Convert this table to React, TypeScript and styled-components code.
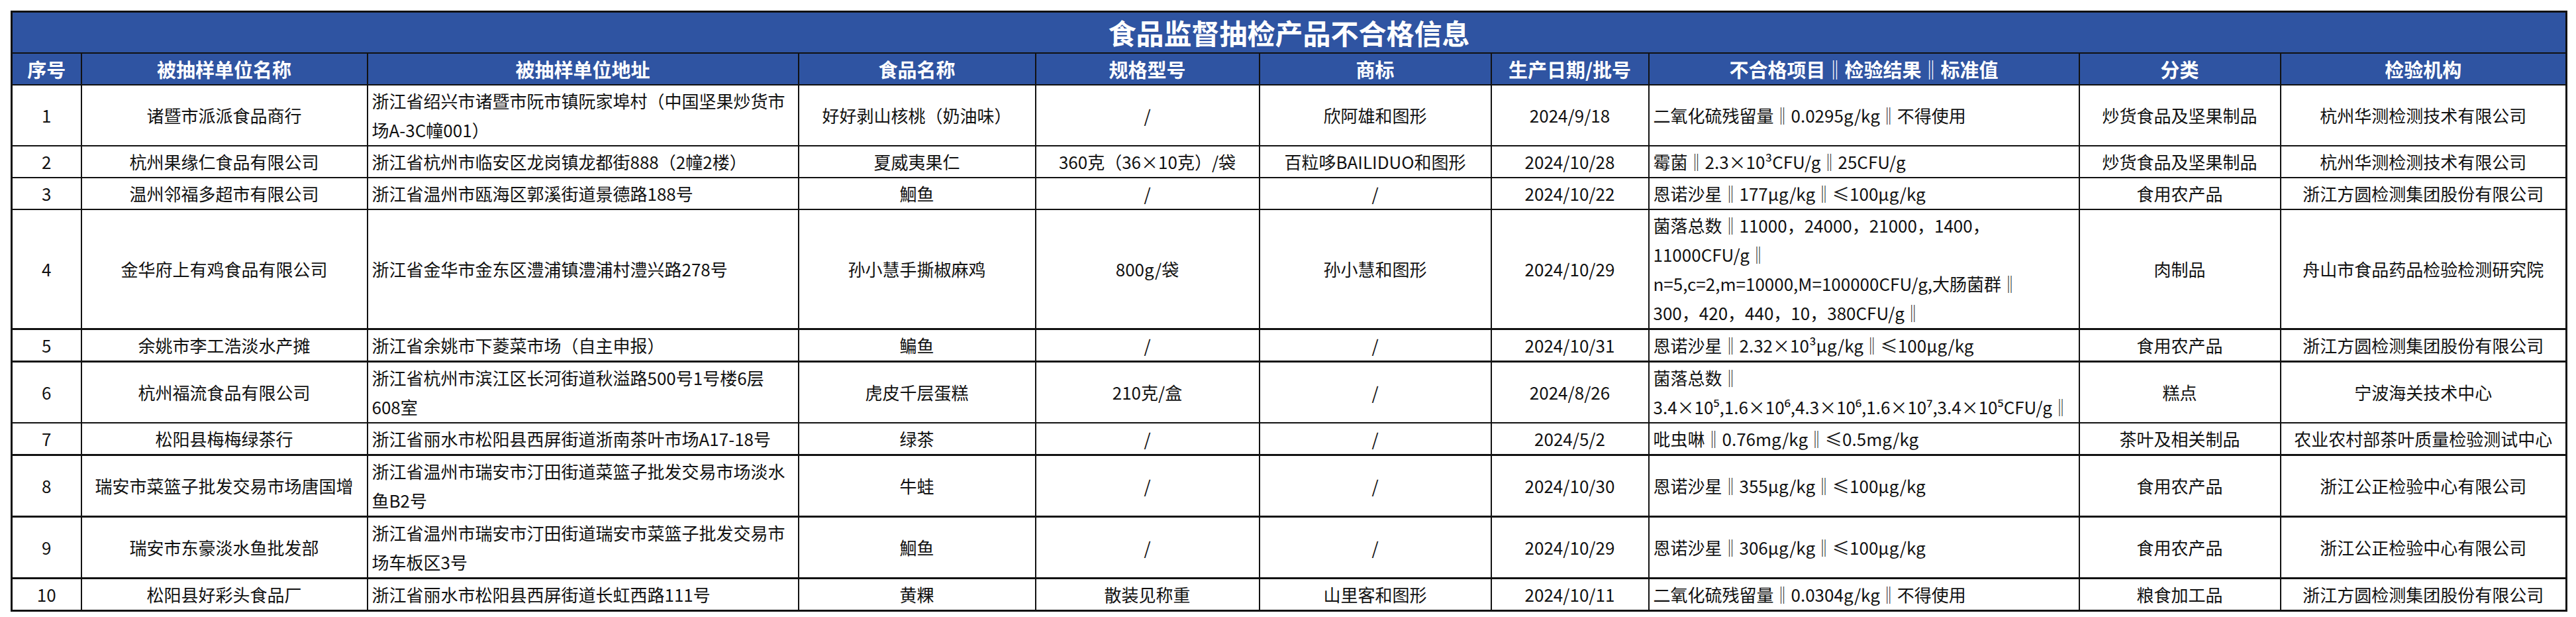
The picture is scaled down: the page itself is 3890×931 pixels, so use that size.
import React from 'react';
import styled, { createGlobalStyle } from 'styled-components';

const GlobalStyle = createGlobalStyle`
  html, body {
    margin: 0;
    padding: 0;
    background: #ffffff;
  }
  body {
    font-family: "Noto Sans CJK SC", "Noto Sans", sans-serif;
  }
`;

const Page = styled.div`
  box-sizing: border-box;
  width: 3890px;
  padding: 16px;
`;

const Table = styled.table`
  width: 3858px;
  table-layout: fixed;
  border-collapse: collapse;
  border: 3px solid #111;
  font-family: "Noto Sans CJK SC", "Noto Sans", sans-serif;
  color: #111;
`;

const TitleCell = styled.th`
  height: 60px;
  padding: 0;
  background: #2f54a2;
  color: #ffffff;
  font-size: 42px;
  font-weight: 700;
  line-height: 60px;
  text-align: center;
  border: 2px solid #111;
`;

const HeadCell = styled.th`
  padding: 1px 4px;
  background: #2f54a2;
  color: #ffffff;
  font-size: 29px;
  font-weight: 700;
  line-height: 44px;
  text-align: center;
  white-space: nowrap;
  border: 2px solid #111;
`;

const Row = styled.tr<{ $thick?: boolean }>`
  & > td {
    border-top-width: ${(p) => (p.$thick ? '3px' : '2px')};
  }
`;

const Cell = styled.td<{ $align?: 'left' | 'center' }>`
  padding: 1px 6px;
  font-size: 26px;
  font-weight: 400;
  line-height: 44px;
  text-align: ${(p) => p.$align ?? 'center'};
  vertical-align: middle;
  white-space: pre-line;
  word-break: normal;
  border: 2px solid #111;
`;

const widths = [105, 432, 651, 358, 338, 350, 238, 650, 304, 432];

const headers = [
  '序号',
  '被抽样单位名称',
  '被抽样单位地址',
  '食品名称',
  '规格型号',
  '商标',
  '生产日期/批号',
  '不合格项目‖检验结果‖标准值',
  '分类',
  '检验机构',
];

type Item = {
  no: string;
  unit: string;
  addr: string;
  food: string;
  spec: string;
  brand: string;
  date: string;
  fail: string;
  kind: string;
  lab: string;
  thick?: boolean;
};

const rows: Item[] = [
  {
    no: '1',
    unit: '诸暨市派派食品商行',
    addr: '浙江省绍兴市诸暨市阮市镇阮家埠村（中国坚果炒货市场A-3C幢001）',
    food: '好好剥山核桃（奶油味）',
    spec: '/',
    brand: '欣阿雄和图形',
    date: '2024/9/18',
    fail: '二氧化硫残留量‖0.0295g/kg‖不得使用',
    kind: '炒货食品及坚果制品',
    lab: '杭州华测检测技术有限公司',
  },
  {
    no: '2',
    unit: '杭州果缘仁食品有限公司',
    addr: '浙江省杭州市临安区龙岗镇龙都街888（2幢2楼）',
    food: '夏威夷果仁',
    spec: '360克（36×10克）/袋',
    brand: '百粒哆BAILIDUO和图形',
    date: '2024/10/28',
    fail: '霉菌‖2.3×10³CFU/g‖25CFU/g',
    kind: '炒货食品及坚果制品',
    lab: '杭州华测检测技术有限公司',
  },
  {
    no: '3',
    unit: '温州邻福多超市有限公司',
    addr: '浙江省温州市瓯海区郭溪街道景德路188号',
    food: '鮰鱼',
    spec: '/',
    brand: '/',
    date: '2024/10/22',
    fail: '恩诺沙星‖177μg/kg‖≤100μg/kg',
    kind: '食用农产品',
    lab: '浙江方圆检测集团股份有限公司',
  },
  {
    no: '4',
    unit: '金华府上有鸡食品有限公司',
    addr: '浙江省金华市金东区澧浦镇澧浦村澧兴路278号',
    food: '孙小慧手撕椒麻鸡',
    spec: '800g/袋',
    brand: '孙小慧和图形',
    date: '2024/10/29',
    fail:
      '菌落总数‖11000，24000，21000，1400，\n11000CFU/g‖\nn=5,c=2,m=10000,M=100000CFU/g,大肠菌群‖\n300，420，440，10，380CFU/g‖',
    kind: '肉制品',
    lab: '舟山市食品药品检验检测研究院',
  },
  {
    no: '5',
    unit: '余姚市李工浩淡水产摊',
    addr: '浙江省余姚市下菱菜市场（自主申报）',
    food: '鳊鱼',
    spec: '/',
    brand: '/',
    date: '2024/10/31',
    fail: '恩诺沙星‖2.32×10³μg/kg‖≤100μg/kg',
    kind: '食用农产品',
    lab: '浙江方圆检测集团股份有限公司',
    thick: true,
  },
  {
    no: '6',
    unit: '杭州福流食品有限公司',
    addr: '浙江省杭州市滨江区长河街道秋溢路500号1号楼6层\n608室',
    food: '虎皮千层蛋糕',
    spec: '210克/盒',
    brand: '/',
    date: '2024/8/26',
    fail: '菌落总数‖\n3.4×10⁵,1.6×10⁶,4.3×10⁶,1.6×10⁷,3.4×10⁵CFU/g‖',
    kind: '糕点',
    lab: '宁波海关技术中心',
    thick: true,
  },
  {
    no: '7',
    unit: '松阳县梅梅绿茶行',
    addr: '浙江省丽水市松阳县西屏街道浙南茶叶市场A17-18号',
    food: '绿茶',
    spec: '/',
    brand: '/',
    date: '2024/5/2',
    fail: '吡虫啉‖0.76mg/kg‖≤0.5mg/kg',
    kind: '茶叶及相关制品',
    lab: '农业农村部茶叶质量检验测试中心',
  },
  {
    no: '8',
    unit: '瑞安市菜篮子批发交易市场唐国增',
    addr: '浙江省温州市瑞安市汀田街道菜篮子批发交易市场淡水鱼B2号',
    food: '牛蛙',
    spec: '/',
    brand: '/',
    date: '2024/10/30',
    fail: '恩诺沙星‖355μg/kg‖≤100μg/kg',
    kind: '食用农产品',
    lab: '浙江公正检验中心有限公司',
    thick: true,
  },
  {
    no: '9',
    unit: '瑞安市东豪淡水鱼批发部',
    addr: '浙江省温州市瑞安市汀田街道瑞安市菜篮子批发交易市场车板区3号',
    food: '鮰鱼',
    spec: '/',
    brand: '/',
    date: '2024/10/29',
    fail: '恩诺沙星‖306μg/kg‖≤100μg/kg',
    kind: '食用农产品',
    lab: '浙江公正检验中心有限公司',
    thick: true,
  },
  {
    no: '10',
    unit: '松阳县好彩头食品厂',
    addr: '浙江省丽水市松阳县西屏街道长虹西路111号',
    food: '黄粿',
    spec: '散装见称重',
    brand: '山里客和图形',
    date: '2024/10/11',
    fail: '二氧化硫残留量‖0.0304g/kg‖不得使用',
    kind: '粮食加工品',
    lab: '浙江方圆检测集团股份有限公司',
    thick: true,
  },
];

export default function App() {
  return (
    <>
      <GlobalStyle />
      <Page>
        <Table>
          <colgroup>
            {widths.map((w, i) => (
              <col key={i} style={{ width: `${w}px` }} />
            ))}
          </colgroup>
          <thead>
            <tr>
              <TitleCell colSpan={10}>食品监督抽检产品不合格信息</TitleCell>
            </tr>
            <tr>
              {headers.map((h) => (
                <HeadCell key={h}>{h}</HeadCell>
              ))}
            </tr>
          </thead>
          <tbody>
            {rows.map((r) => (
              <Row key={r.no} $thick={r.thick}>
                <Cell>{r.no}</Cell>
                <Cell>{r.unit}</Cell>
                <Cell $align="left">{r.addr}</Cell>
                <Cell>{r.food}</Cell>
                <Cell>{r.spec}</Cell>
                <Cell>{r.brand}</Cell>
                <Cell>{r.date}</Cell>
                <Cell $align="left">{r.fail}</Cell>
                <Cell>{r.kind}</Cell>
                <Cell>{r.lab}</Cell>
              </Row>
            ))}
          </tbody>
        </Table>
      </Page>
    </>
  );
}
